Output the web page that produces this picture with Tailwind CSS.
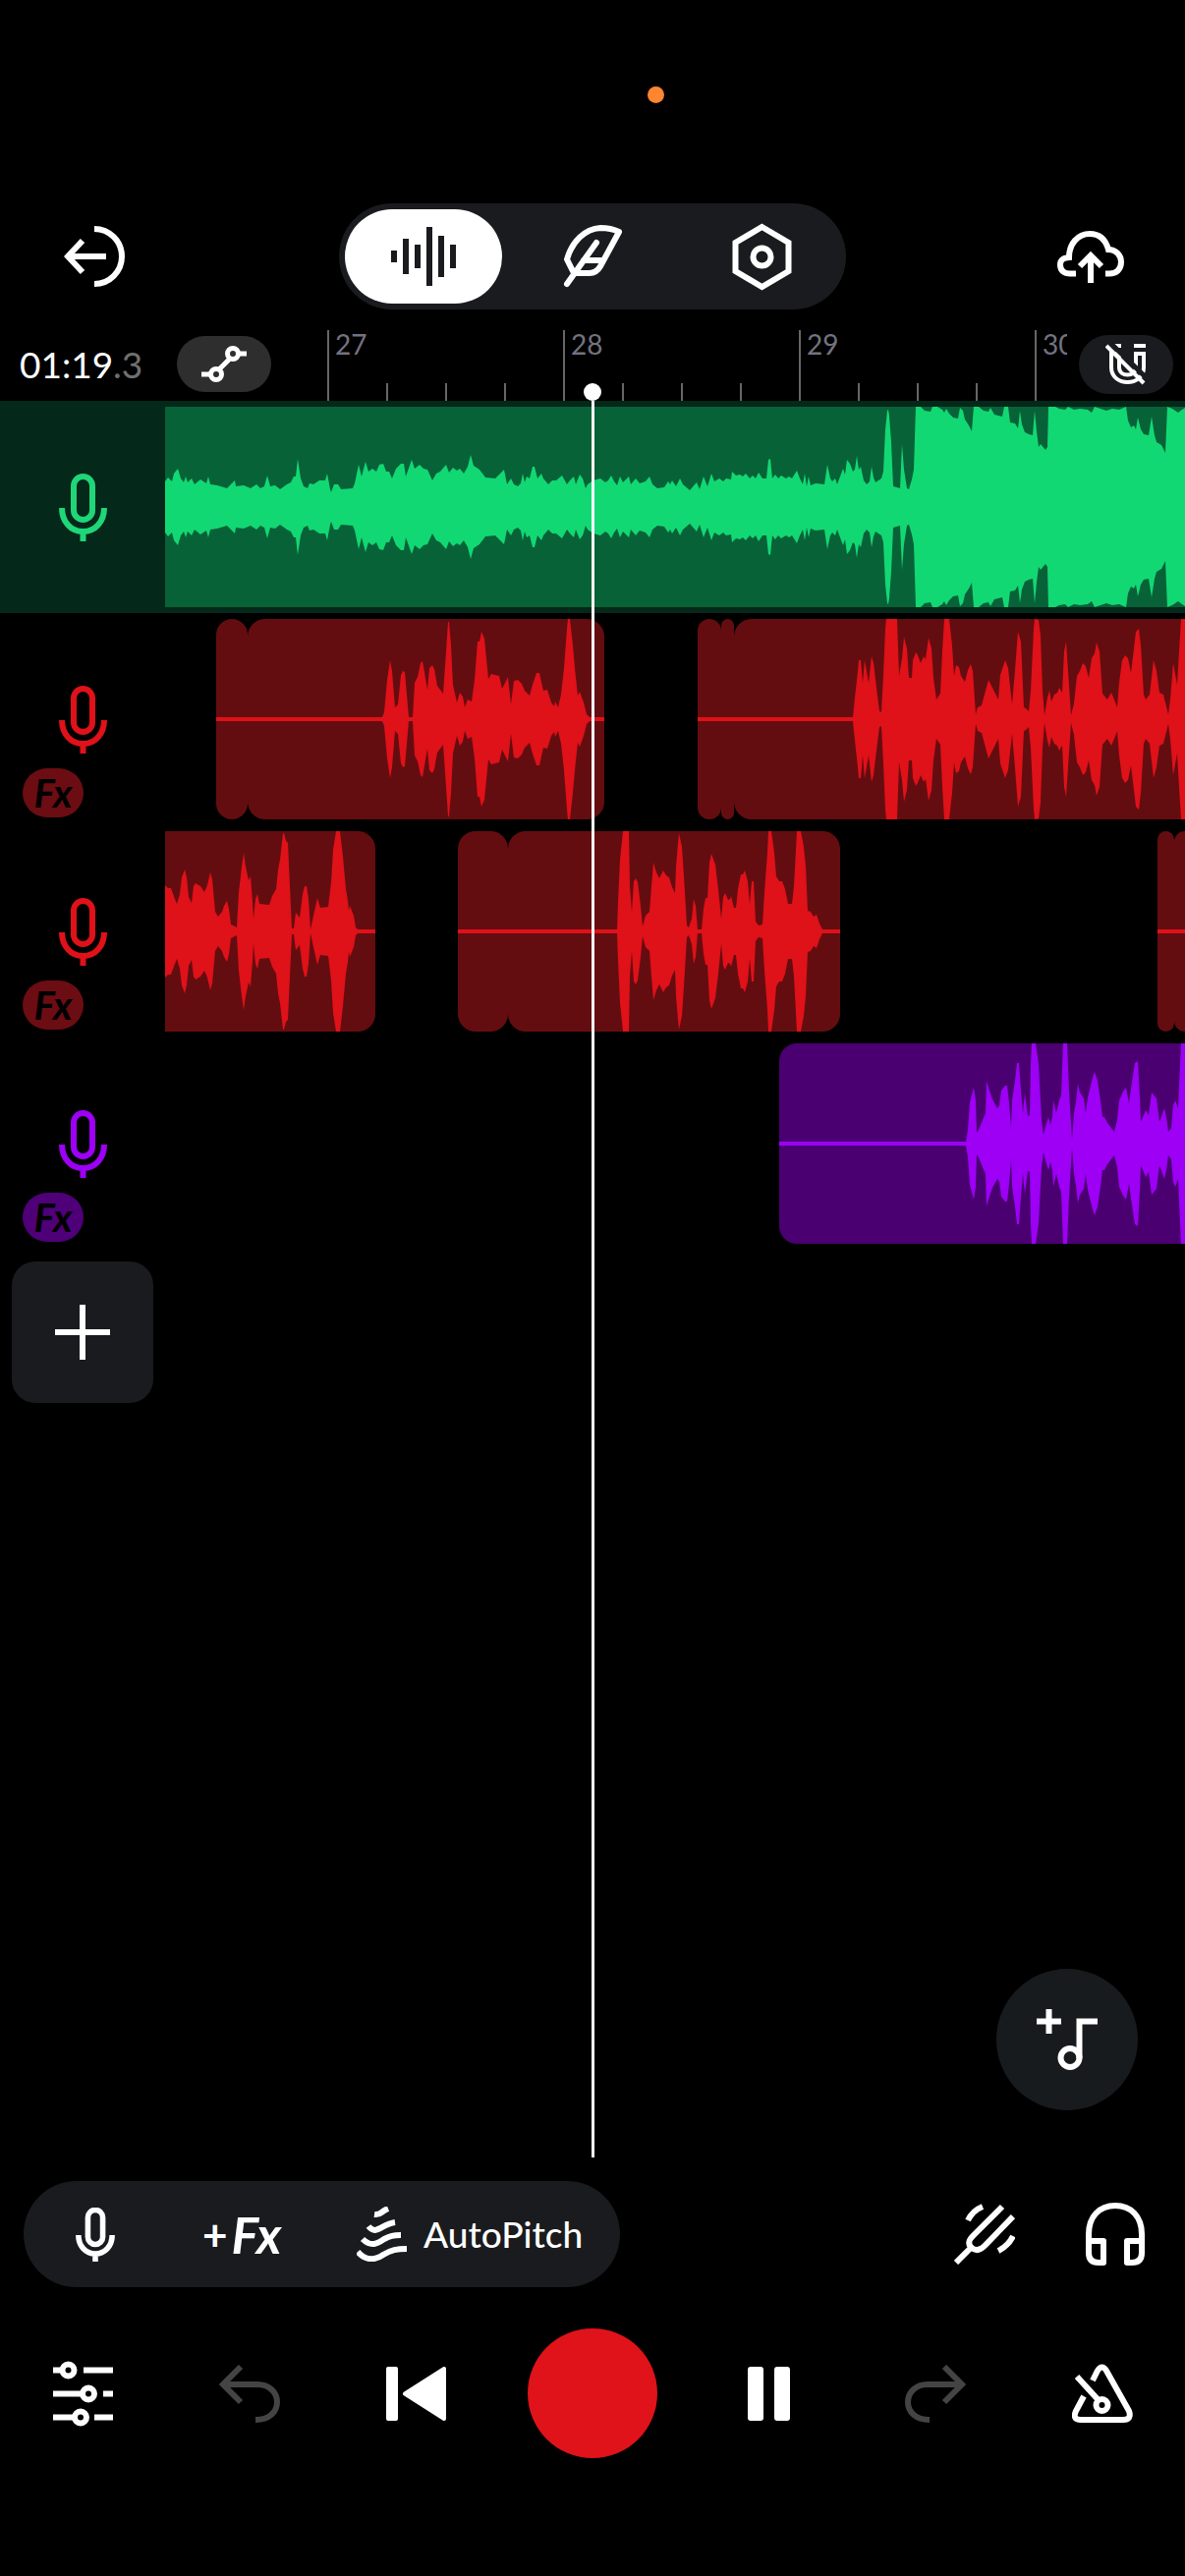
<!DOCTYPE html>
<html lang="en">
<head>
    <meta charset="UTF-8">
    <meta name="viewport" content="width=device-width, initial-scale=1">
    <title>Studio</title>
    <script src="https://cdn.jsdelivr.net/npm/@tailwindcss/browser@4"></script>
</head>
<body class="bg-black text-white font-['Lato',sans-serif]">
<div class="flex min-h-screen flex-col overflow-hidden">

    <!-- Status bar -->
    <div class="flex h-[207px] justify-center pt-[88px] pl-32">
        <span class="size-[17px] rounded-full bg-[#ff8630]"></span>
    </div>

    <!-- Header -->
    <header class="flex items-center justify-between px-12">
        <button type="button" aria-label="Exit" class="flex h-24 w-24 items-center justify-center">
            <svg class="h-[62px] w-[62px]" viewBox="0 0 62 62" fill="none" stroke="currentColor" stroke-width="6">
                <path d="M31 3a28 28 0 0 1 0 56M43 31H5M19 15L4 31l15 16"/>
            </svg>
        </button>
        <nav class="flex gap-3 rounded-full bg-[#1a1b1e] p-1.5">
            <button type="button" aria-label="Tracks" class="flex h-24 w-40 items-center justify-center rounded-full bg-white text-[#1a1b1e]">
                <svg class="h-[60px] w-[66px]" viewBox="0 0 66 60" fill="currentColor">
                    <rect x="0" y="24" width="6" height="12"/>
                    <rect x="12" y="12" width="6" height="36"/>
                    <rect x="24" y="18" width="6" height="24"/>
                    <rect x="36" y="0" width="6" height="60"/>
                    <rect x="48" y="9" width="6" height="42"/>
                    <rect x="60" y="18" width="6" height="24"/>
                </svg>
            </button>
            <button type="button" aria-label="Lyrics" class="flex h-24 w-40 items-center justify-center">
                <svg class="h-16 w-[60px]" viewBox="0 0 60 64" fill="none" stroke="currentColor" stroke-width="6" stroke-linejoin="round" stroke-linecap="round">
                    <path d="M11 49L4 35C9 17 22 4 38 3q11 0 19 4L38 42q-4 7-11 7zM4 60l30-42M21 36h19"/>
                </svg>
            </button>
            <button type="button" aria-label="Settings" class="flex h-24 w-40 items-center justify-center">
                <svg class="h-[69px] w-[61px]" viewBox="0 0 61 69" fill="none" stroke="currentColor" stroke-width="6">
                    <path d="M30.500 4L57.500 20v29L30.500 65 3.500 49V20z"/>
                    <circle cx="30.500" cy="34.500" r="9"/>
                </svg>
            </button>
        </nav>
        <button type="button" aria-label="Save" class="flex h-24 w-24 items-center justify-center">
            <svg class="h-[53px] w-[68px]" viewBox="0 0 68 53" fill="none" stroke="currentColor" stroke-width="6">
                <path d="M19 43.500h-6c-6 0-10-3-10-9s4-7 9-7.500c0-14 9-24 21-24 9 0 16 5 19 16 8 0 13 6 13 12.500 0 8-5 12-12 12h-4M34 53V26M23 36l11-11 11 11"/>
            </svg>
        </button>
    </header>

    <!-- Time and ruler -->
    <div class="flex h-[93px] items-center pt-[18px]">
        <div class="w-[180px] pl-5 text-[37px]">01:19<span class="text-[#707070]">.3</span></div>
        <button type="button" aria-label="Automation" class="flex h-[57px] w-24 items-center justify-center rounded-full bg-[#2e2e2e]">
            <svg class="h-[37px] w-[46px]" viewBox="0 0 46 37" fill="none" stroke="currentColor" stroke-width="5">
                <circle cx="15" cy="29" r="5.500"/>
                <circle cx="32" cy="8" r="5.500"/>
                <path d="M0 29h9M38 8h8M18 24l11-11"/>
            </svg>
        </button>
        <div class="flex h-full min-w-0 flex-1 items-end overflow-hidden pl-[57px] text-[28px] leading-7 text-[#73737f]">
            <div class="flex h-[72px] w-60 shrink-0 flex-col justify-between border-l-2 border-[#666]">
                <span class="pl-1.5">27</span>
                <div class="flex pl-[58px]"><i class="h-[18px] w-[60px] border-l-2 border-[#666]"></i><i class="h-[18px] w-[60px] border-l-2 border-[#666]"></i><i class="h-[18px] w-[60px] border-l-2 border-[#666]"></i></div>
            </div>
            <div class="flex h-[72px] w-60 shrink-0 flex-col justify-between border-l-2 border-[#666]">
                <span class="pl-1.5">28</span>
                <div class="flex pl-[58px]"><i class="h-[18px] w-[60px] border-l-2 border-[#666]"></i><i class="h-[18px] w-[60px] border-l-2 border-[#666]"></i><i class="h-[18px] w-[60px] border-l-2 border-[#666]"></i></div>
            </div>
            <div class="flex h-[72px] w-60 shrink-0 flex-col justify-between border-l-2 border-[#666]">
                <span class="pl-1.5">29</span>
                <div class="flex pl-[58px]"><i class="h-[18px] w-[60px] border-l-2 border-[#666]"></i><i class="h-[18px] w-[60px] border-l-2 border-[#666]"></i><i class="h-[18px] w-[60px] border-l-2 border-[#666]"></i></div>
            </div>
            <div class="flex h-[72px] w-60 shrink-0 flex-col justify-between border-l-2 border-[#666]">
                <span class="pl-1.5">30</span>
            </div>
        </div>
        <button type="button" aria-label="Snap off" class="mx-3 flex h-[60px] w-24 items-center justify-center rounded-full bg-[#1a1b1e]">
            <svg class="h-[42px] w-[42px]" viewBox="0 0 42 42" fill="none" stroke="currentColor" stroke-width="4">
                <path d="M6 10h8v14c0 10 17 10 17 0V10h8v14c0 20-33 20-33 0zM7 2h9M29 2h12"/>
                <path d="M5 -1l37 36" stroke="#1a1b1e" stroke-width="5"/>
                <path d="M1 2l38 38"/>
            </svg>
        </button>
    </div>

    <!-- Tracks -->
    <main class="relative flex-1">
        <section class="flex h-[216px] bg-[#042819]">
            <button type="button" aria-label="Track 1" class="flex w-[168px] shrink-0 items-center justify-center text-[#1fd678]">
                <svg class="h-[69px] w-[49px]" viewBox="0 0 49 69" fill="none" stroke="currentColor" stroke-width="6">
                    <rect x="15" y="3" width="19" height="44" rx="9.500"/>
                    <path d="M3 35c0 14 9 24 21.500 24S46 49 46 35M24.500 59v10"/>
                </svg>
            </button>
            <div class="relative flex min-w-0 flex-1 overflow-hidden py-1.5">
                <div class="flex-1 bg-[#086238]"></div>
                <svg class="absolute left-0 top-1.5 h-[204px] w-[1038px] text-[#12d873]" viewBox="0 0 1038 204"><path data-wave="green" fill="currentColor"/></svg>
            </div>
        </section>

        <section class="flex h-[216px]">
            <button type="button" aria-label="Track 2" class="relative flex w-[168px] shrink-0 items-center justify-center text-[#df1119]">
                <svg class="h-[69px] w-[49px]" viewBox="0 0 49 69" fill="none" stroke="currentColor" stroke-width="6">
                    <rect x="15" y="3" width="19" height="44" rx="9.500"/>
                    <path d="M3 35c0 14 9 24 21.500 24S46 49 46 35M24.500 59v10"/>
                </svg>
                <span class="absolute bottom-2 left-[23px] flex h-[50px] w-[62px] items-center justify-center rounded-full bg-[#6b0d12] text-[40px] font-bold text-black italic">Fx</span>
            </button>
            <div class="relative flex min-w-0 flex-1 overflow-hidden py-1.5">
                <div class="ml-[52px] w-8 shrink-0 rounded-[18px] bg-[#640d10]"></div>
                <div class="w-[363px] shrink-0 rounded-[18px] bg-[#640d10]"></div>
                <div class="ml-[95px] w-6 shrink-0 rounded-[18px] bg-[#640d10]"></div>
                <div class="w-[13px] shrink-0 rounded-[18px] bg-[#640d10]"></div>
                <div class="flex-1 rounded-l-[18px] bg-[#640d10]"></div>
                <svg class="absolute left-0 top-1.5 h-[204px] w-[1038px] text-[#df1119]" viewBox="0 0 1038 204"><path data-wave="redA" fill="currentColor"/></svg>
            </div>
        </section>

        <section class="flex h-[216px]">
            <button type="button" aria-label="Track 3" class="relative flex w-[168px] shrink-0 items-center justify-center text-[#df1119]">
                <svg class="h-[69px] w-[49px]" viewBox="0 0 49 69" fill="none" stroke="currentColor" stroke-width="6">
                    <rect x="15" y="3" width="19" height="44" rx="9.500"/>
                    <path d="M3 35c0 14 9 24 21.500 24S46 49 46 35M24.500 59v10"/>
                </svg>
                <span class="absolute bottom-2 left-[23px] flex h-[50px] w-[62px] items-center justify-center rounded-full bg-[#6b0d12] text-[40px] font-bold text-black italic">Fx</span>
            </button>
            <div class="relative flex min-w-0 flex-1 overflow-hidden py-1.5">
                <div class="w-[214px] shrink-0 rounded-r-[18px] bg-[#640d10]"></div>
                <div class="ml-[84px] w-[51px] shrink-0 rounded-[18px] bg-[#640d10]"></div>
                <div class="w-[338px] shrink-0 rounded-[18px] bg-[#640d10]"></div>
                <div class="ml-[323px] w-[17px] shrink-0 rounded-[18px] bg-[#640d10]"></div>
                <div class="flex-1 rounded-l-[11px] bg-[#640d10]"></div>
                <svg class="absolute left-0 top-1.5 h-[204px] w-[1038px] text-[#df1119]" viewBox="0 0 1038 204"><path data-wave="redB" fill="currentColor"/></svg>
            </div>
        </section>

        <section class="flex h-[216px]">
            <button type="button" aria-label="Track 4" class="relative flex w-[168px] shrink-0 items-center justify-center text-[#9d00f5]">
                <svg class="h-[69px] w-[49px]" viewBox="0 0 49 69" fill="none" stroke="currentColor" stroke-width="6">
                    <rect x="15" y="3" width="19" height="44" rx="9.500"/>
                    <path d="M3 35c0 14 9 24 21.500 24S46 49 46 35M24.500 59v10"/>
                </svg>
                <span class="absolute bottom-2 left-[23px] flex h-[50px] w-[62px] items-center justify-center rounded-full bg-[#4f0079] text-[40px] font-bold text-black italic">Fx</span>
            </button>
            <div class="relative flex min-w-0 flex-1 overflow-hidden py-1.5">
                <div class="ml-[625px] flex-1 rounded-l-[18px] bg-[#4a0070]"></div>
                <svg class="absolute left-0 top-1.5 h-[204px] w-[1038px] text-[#9d00f5]" viewBox="0 0 1038 204"><path data-wave="purple" fill="currentColor"/></svg>
            </div>
        </section>

        <div class="p-3">
            <button type="button" aria-label="Add track" class="flex size-36 items-center justify-center rounded-3xl bg-[#1a1b1e]">
                <svg class="size-14" viewBox="0 0 56 56" fill="none" stroke="currentColor" stroke-width="6"><path d="M28 0v56M0 28h56"/></svg>
            </button>
        </div>

        <!-- Playhead -->
        <div class="absolute -top-[18px] bottom-0 left-1/2 flex w-[18px] -translate-x-1/2 flex-col items-center">
            <span class="size-[18px] shrink-0 rounded-full bg-white"></span>
            <span class="w-[3px] flex-1 bg-white"></span>
        </div>

        <button type="button" aria-label="Add sound" class="absolute right-12 bottom-12 flex size-36 items-center justify-center rounded-full bg-[#181b1d]">
            <svg class="size-[62px]" viewBox="0 0 62 62" fill="none" stroke="currentColor" stroke-width="6">
                <path d="M12.500 0v25M0 12.500h25M62 12.500H43.500V50"/>
                <circle cx="34" cy="49.500" r="9.500"/>
            </svg>
        </button>
    </main>

    <footer class="pt-6 pb-[120px]">
        <div class="flex items-center justify-between pr-[41px] pl-6">
            <div class="flex h-[108px] items-center rounded-full bg-[#1a1b1e] pr-[38px] pl-[53px]">
                <button type="button" aria-label="Record voice">
                    <svg class="h-[55px] w-10" viewBox="0 0 49 69" fill="none" stroke="currentColor" stroke-width="7">
                        <rect x="15" y="3" width="19" height="44" rx="9.500"/>
                        <path d="M3 35c0 14 9 24 21.500 24S46 49 46 35M24.500 59v10"/>
                    </svg>
                </button>
                <button type="button" class="ml-[89px] flex w-[88px] items-center text-[52px] leading-none font-bold"><span class="text-[44px]">+</span><span class="pl-1 italic">Fx</span></button>
                <button type="button" class="ml-[69px] flex items-center gap-4 text-[37px] font-medium">
                    <svg class="h-14 w-[52px]" viewBox="0 0 52 56" fill="none" stroke="currentColor" stroke-width="6">
                        <path d="M18 8c7 1 6-3 14-6M12 20c8 10 13-2 27-4M6 33c9 9 16 4 22 0 6-3 9-4 17-4M1 46c7 8 16 10 26 3 8-5 14-6 24-6"/>
                    </svg>
                    AutoPitch
                </button>
            </div>
            <div class="flex items-center gap-[72px]">
                <button type="button" aria-label="Tuner">
                    <svg class="size-[62px]" viewBox="0 0 62 62" fill="none" stroke="currentColor" stroke-width="6">
                        <path d="M49 3L19 33q-7 7-1 12 6 5 13-2l29-30M18 44L2 60M29 3Q19 7 14 17M60 33q-5 10-15 15"/>
                    </svg>
                </button>
                <button type="button" aria-label="Monitoring">
                    <svg class="h-16 w-[60px]" viewBox="0 0 60 64" fill="none" stroke="currentColor" stroke-width="6" stroke-linejoin="round">
                        <path d="M3 39V32C3 14 14 3 30 3s27 11 27 29v19q0 10-10 10h-5V39h15M3 32v19q0 10 10 10h5V39H3"/>
                    </svg>
                </button>
            </div>
        </div>

        <div class="mt-[42px] flex items-center justify-between px-7">
            <button type="button" aria-label="Mixer" class="flex w-28 justify-center">
                <svg class="h-[67px] w-[61px]" viewBox="0 0 61 67" fill="none" stroke="currentColor" stroke-width="6">
                    <path d="M0 9.500h9M31 9.500h30M0 33.500h30M51 33.500h10M0 57.500h22M42 57.500h19"/>
                    <circle cx="15.500" cy="9.500" r="6"/>
                    <circle cx="36" cy="33.500" r="6"/>
                    <circle cx="28" cy="57.500" r="6"/>
                </svg>
            </button>
            <button type="button" aria-label="Undo" class="flex w-28 justify-center text-[#444]">
                <svg class="h-[59px] w-[62px]" viewBox="0 0 62 59" fill="none" stroke="currentColor" stroke-width="6">
                    <path d="M5 20h34c12 0 20 8 20 18s-8 18-22 18M22 2L4 20l18 18"/>
                </svg>
            </button>
            <button type="button" aria-label="Back to start" class="flex w-28 justify-center">
                <svg class="h-[55px] w-[61px]" viewBox="0 0 61 55" fill="currentColor" stroke="currentColor" stroke-width="4" stroke-linejoin="round">
                    <path d="M2 2h8v51H2zM59 2v51L19 27.500z"/>
                </svg>
            </button>
            <button type="button" aria-label="Record" class="size-[132px] rounded-full bg-[#df1319]"></button>
            <button type="button" aria-label="Pause" class="flex w-28 justify-center">
                <svg class="h-[55px] w-[43px]" viewBox="0 0 43 55" fill="currentColor">
                    <rect width="16" height="55" rx="3"/>
                    <rect x="27" width="16" height="55" rx="3"/>
                </svg>
            </button>
            <button type="button" aria-label="Redo" class="flex w-28 justify-center text-[#444]">
                <svg class="h-[59px] w-[62px]" viewBox="0 0 62 59" fill="none" stroke="currentColor" stroke-width="6">
                    <path d="M57 20H23C11 20 3 28 3 38s8 18 22 18M40 2l18 18-18 18"/>
                </svg>
            </button>
            <button type="button" aria-label="Metronome" class="flex w-28 justify-center">
                <svg class="h-[60px] w-[62px]" viewBox="0 0 62 60" fill="none" stroke="currentColor" stroke-width="6">
                    <path d="M21 17l5-10q4.500-7 9 0l23 41q3 9-6 9H9q-9 0-5-9l8-15M5 13l21 23"/>
                    <circle cx="30.500" cy="42" r="6"/>
                </svg>
            </button>
        </div>
    </footer>
</div>

<script>
    // Peaks per track as x,amplitude pairs; a "|" starts a new region
    const peaks = {
        green: '0,26 3,30 7,26 9,34 13,39 16,29 19,25 21,31 23,25 27,29 30,23 36,28 42,24 44,31 46,23 53,22 63,19 71,27 72,21 80,22 87,19 93,23 97,19 101,21 104,32 107,21 112,22 117,18 124,23 128,25 131,31 133,31 135,49 138,29 141,21 145,19 147,24 151,23 157,27 163,27 165,34 168,18 169,15 172,23 176,23 179,18 191,19 193,24 197,43 200,31 204,46 207,36 211,39 215,36 218,43 222,44 225,36 228,36 231,29 235,39 240,44 243,44 245,31 251,48 254,39 259,43 263,39 267,38 272,27 276,34 280,36 286,43 289,35 293,40 297,37 300,39 304,34 308,41 311,53 314,42 320,38 326,30 336,29 345,38 348,23 352,29 355,23 359,21 362,24 364,34 366,25 368,31 371,29 374,41 376,41 379,29 383,34 385,29 390,23 394,27 398,27 404,32 409,23 412,27 416,31 418,23 422,33 425,29 428,19 430,23 433,25 436,27 443,29 448,25 451,27 454,32 457,26 460,22 463,31 466,25 472,31 474,23 479,29 483,24 489,26 493,31 496,23 501,19 508,20 512,26 514,23 516,27 520,21 524,29 527,23 534,17 541,25 544,18 548,31 552,21 556,34 559,26 564,29 568,26 571,29 576,28 577,36 581,32 585,33 588,31 591,34 595,29 598,32 601,29 604,35 608,29 612,29 614,48 616,49 618,29 621,33 624,29 627,32 632,29 635,31 638,29 643,37 646,29 649,23 651,34 653,21 655,31 657,22 662,24 671,23 674,43 677,29 679,26 682,29 684,23 687,31 690,39 692,33 694,48 697,44 700,36 702,38 704,52 706,38 708,41 711,27 714,23 717,26 719,41 721,30 723,25 729,29 731,36 733,79 735,98 736,99 737,93 739,66 741,21 748,19 750,64 752,38 755,19 757,18 760,28 762,38 764,102 769,102 773,98 779,97 781,102 786,102 791,99 793,96 795,100 798,95 802,91 807,90 809,101 812,98 814,89 818,83 821,77 823,102 828,102 833,98 838,97 840,101 844,94 852,92 854,102 858,102 860,86 865,85 868,80 869,88 870,98 872,84 875,76 879,74 883,73 885,98 887,77 889,61 891,64 896,58 898,61 899,102 906,102 910,100 916,99 919,102 925,99 931,100 939,99 943,96 946,102 952,100 958,98 964,100 971,99 978,102 980,88 983,81 986,83 988,79 990,91 993,79 996,74 1001,73 1004,92 1007,73 1009,66 1014,63 1018,55 1020,102 1025,100 1031,96 1035,99 1038,101',
        redA: '52,2 221,2 223,7 226,40 229,60 231,49 234,12 237,15 240,45 242,49 244,48 248,2 252,2 254,37 257,43 260,57 262,59 267,30 269,52 272,55 274,51 277,34 280,30 283,26 286,69 288,99 289,99 291,75 293,35 297,17 300,27 303,23 305,12 308,20 312,18 315,40 318,79 320,79 322,89 325,82 329,41 332,46 340,44 343,31 349,43 352,15 355,39 359,40 363,36 366,29 371,24 374,35 378,47 381,47 385,29 389,30 393,17 396,13 397,18 400,12 403,25 406,52 409,92 410,102 412,102 415,75 417,52 420,24 422,28 426,17 429,5 432,2 447,2 | 542,2 700,2 702,22 705,49 706,60 708,60 710,37 712,60 716,37 719,64 721,57 724,32 727,8 729,7 731,45 733,92 734,102 745,102 747,44 750,62 752,84 755,72 757,42 760,42 761,60 764,68 766,65 769,57 772,64 774,61 777,83 780,72 782,42 785,20 789,26 791,69 793,102 798,102 801,75 803,44 805,55 808,53 810,44 814,38 817,50 820,56 822,49 825,5 827,12 831,14 835,29 838,40 843,30 848,20 850,45 855,60 858,52 862,15 865,50 868,89 871,79 874,12 876,11 879,8 881,29 884,92 885,102 889,101 891,85 893,29 895,4 898,22 900,29 902,18 905,25 908,27 910,32 913,27 915,69 917,79 920,34 922,4 925,16 928,44 931,49 934,57 937,54 940,42 943,62 946,67 948,78 951,69 954,26 959,20 963,27 966,20 969,12 971,37 974,60 977,65 980,62 983,47 986,72 988,89 991,92 993,75 996,25 998,20 1002,25 1006,60 1009,49 1012,27 1016,25 1021,5 1023,20 1026,57 1030,35 1032,69 1034,102 1038,102',
        redB: '0,47 3,44 6,44 10,33 12,28 15,38 17,55 20,63 22,55 24,35 27,29 29,46 31,49 36,46 40,40 43,47 46,60 48,53 51,20 54,15 58,20 60,26 63,31 65,23 67,7 73,4 75,40 78,66 80,80 82,66 85,52 87,56 89,30 90,13 92,33 94,38 96,28 106,27 109,36 113,43 115,63 117,73 120,100 121,100 123,92 125,90 127,46 129,3 131,3 133,19 137,14 140,38 142,46 144,46 146,33 148,2 151,16 155,34 158,24 166,25 169,50 171,83 174,102 178,102 181,76 184,43 186,31 187,21 188,26 192,16 194,4 196,2 214,2 | 298,2 460,2 461,30 463,73 466,102 472,102 473,46 475,20 477,51 479,54 481,50 484,26 486,5 489,16 493,20 495,46 497,70 500,60 503,54 507,62 510,57 513,55 516,45 519,39 520,66 522,90 523,100 526,86 528,56 531,6 533,4 536,13 538,33 540,26 542,2 546,2 548,23 550,34 552,34 554,70 556,79 560,68 563,43 566,13 568,35 570,39 573,32 575,33 576,36 579,24 581,24 583,43 586,58 588,58 590,62 593,51 595,28 597,51 599,51 601,10 604,6 608,7 610,40 613,80 614,102 617,102 620,80 622,56 625,51 628,51 631,43 634,28 638,28 640,46 643,102 647,102 650,86 652,66 654,21 657,20 660,15 663,17 666,8 669,2 687,2 | 1010,2 1038,2',
        purple: '625,2 815,2 817,14 819,42 823,57 825,44 826,11 828,14 832,24 835,31 836,64 839,54 842,45 847,36 849,39 851,54 855,59 857,59 859,41 861,16 862,44 865,64 867,82 869,82 871,54 873,31 875,51 878,28 880,29 881,81 882,102 886,102 889,81 892,24 894,9 896,17 899,27 901,19 903,27 904,44 907,31 910,44 912,49 914,102 918,102 920,54 923,4 925,31 927,42 929,61 931,52 935,46 937,31 939,47 944,67 946,73 949,64 952,44 954,27 956,27 959,21 966,12 969,24 971,44 975,53 978,57 981,41 983,56 987,82 990,84 992,47 993,22 998,34 1001,29 1004,52 1009,46 1012,22 1017,36 1019,27 1021,12 1024,16 1026,39 1028,44 1031,36 1033,81 1034,102 1038,102'
    };

    document.querySelectorAll('[data-wave]').forEach(function (path) {
        const d = peaks[path.dataset.wave].split(' | ').map(function (region) {
            const points = region.split(' ').map(p => p.split(',').map(Number));
            const top = points.map(([x, a]) => x + ' ' + (102 - a));
            const bottom = points.map(([x, a]) => x + ' ' + (102 + a)).reverse();
            return 'M' + top.concat(bottom).join('L') + 'Z';
        });
        path.setAttribute('d', d.join(''));
    });
</script>
</body>
</html>
